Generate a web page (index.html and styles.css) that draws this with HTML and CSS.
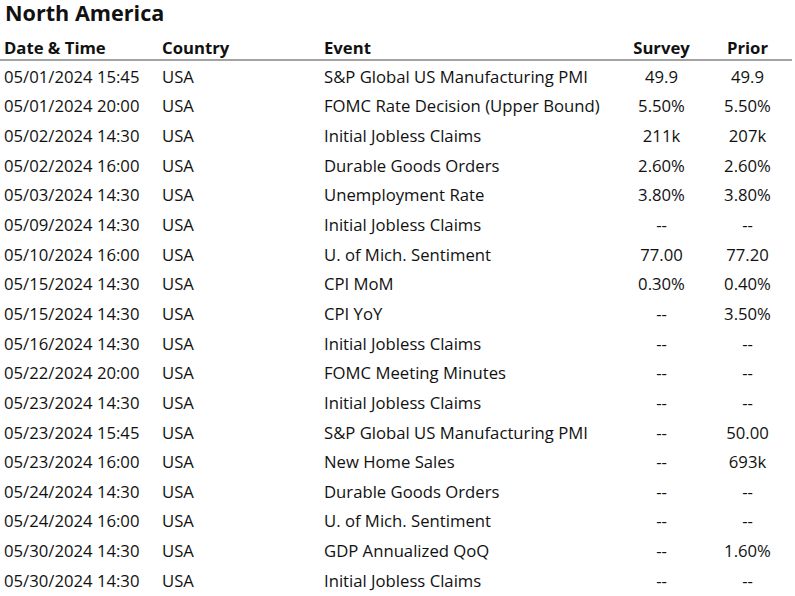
FILE: index.html
```html
<!DOCTYPE html>
<html>
<head>
<meta charset="utf-8">
<link rel="stylesheet" href="styles.css">
</head>
<body>
<h1 class="title">North America</h1>
<table class="cal">
<colgroup>
<col class="c-date"><col class="c-country"><col class="c-event"><col class="c-survey"><col class="c-prior">
</colgroup>
<thead>
<tr class="head"><th class="l">Date &amp; Time</th><th class="l">Country</th><th class="l">Event</th><th class="n">Survey</th><th class="n">Prior</th></tr>
</thead>
<tbody>
<tr><td>05/01/2024 15:45</td><td>USA</td><td>S&amp;P Global US Manufacturing PMI</td><td class="n">49.9</td><td class="n">49.9</td></tr>
<tr><td>05/01/2024 20:00</td><td>USA</td><td>FOMC Rate Decision (Upper Bound)</td><td class="n">5.50%</td><td class="n">5.50%</td></tr>
<tr><td>05/02/2024 14:30</td><td>USA</td><td>Initial Jobless Claims</td><td class="n">211k</td><td class="n">207k</td></tr>
<tr><td>05/02/2024 16:00</td><td>USA</td><td>Durable Goods Orders</td><td class="n">2.60%</td><td class="n">2.60%</td></tr>
<tr><td>05/03/2024 14:30</td><td>USA</td><td>Unemployment Rate</td><td class="n">3.80%</td><td class="n">3.80%</td></tr>
<tr><td>05/09/2024 14:30</td><td>USA</td><td>Initial Jobless Claims</td><td class="n">--</td><td class="n">--</td></tr>
<tr><td>05/10/2024 16:00</td><td>USA</td><td>U. of Mich. Sentiment</td><td class="n">77.00</td><td class="n">77.20</td></tr>
<tr><td>05/15/2024 14:30</td><td>USA</td><td>CPI MoM</td><td class="n">0.30%</td><td class="n">0.40%</td></tr>
<tr><td>05/15/2024 14:30</td><td>USA</td><td>CPI YoY</td><td class="n">--</td><td class="n">3.50%</td></tr>
<tr><td>05/16/2024 14:30</td><td>USA</td><td>Initial Jobless Claims</td><td class="n">--</td><td class="n">--</td></tr>
<tr><td>05/22/2024 20:00</td><td>USA</td><td>FOMC Meeting Minutes</td><td class="n">--</td><td class="n">--</td></tr>
<tr><td>05/23/2024 14:30</td><td>USA</td><td>Initial Jobless Claims</td><td class="n">--</td><td class="n">--</td></tr>
<tr><td>05/23/2024 15:45</td><td>USA</td><td>S&amp;P Global US Manufacturing PMI</td><td class="n">--</td><td class="n">50.00</td></tr>
<tr><td>05/23/2024 16:00</td><td>USA</td><td>New Home Sales</td><td class="n">--</td><td class="n">693k</td></tr>
<tr><td>05/24/2024 14:30</td><td>USA</td><td>Durable Goods Orders</td><td class="n">--</td><td class="n">--</td></tr>
<tr><td>05/24/2024 16:00</td><td>USA</td><td>U. of Mich. Sentiment</td><td class="n">--</td><td class="n">--</td></tr>
<tr><td>05/30/2024 14:30</td><td>USA</td><td>GDP Annualized QoQ</td><td class="n">--</td><td class="n">1.60%</td></tr>
<tr><td>05/30/2024 14:30</td><td>USA</td><td>Initial Jobless Claims</td><td class="n">--</td><td class="n">--</td></tr>
</tbody>
</table>
</body>
</html>
```
FILE: styles.css
```css
html, body {
  margin: 0;
  padding: 0;
  background: #fff;
}
body {
  font-family: "Open Sans", "Noto Sans", sans-serif;
  color: #111;
  overflow: hidden;
}
.title {
  margin: 0;
  padding: 0 0 0 5px;
  font-size: 21.6px;
  line-height: 26px;
  font-weight: 700;
}
.cal {
  border-collapse: collapse;
  table-layout: fixed;
  width: 792px;
  font-size: 16.7px;
}
.c-date { width: 162px; }
.c-country { width: 162px; }
.c-event { width: 296px; }
.c-survey { width: 83px; }
.c-prior { width: 89px; }
.cal .head { height: 34px; }
.cal th {
  font-weight: 700;
  padding: 0;
  vertical-align: bottom;
  border-bottom: 2px solid #a3a3a3;
}
.cal tbody tr { height: 29.65px; }
.cal td {
  padding: 3px 0 0 0;
  vertical-align: middle;
  white-space: nowrap;
}
.cal th.l, .cal td { text-align: left; }
.cal th:first-child, .cal td:first-child { padding-left: 4px; }
.cal .n { text-align: center; }
```
